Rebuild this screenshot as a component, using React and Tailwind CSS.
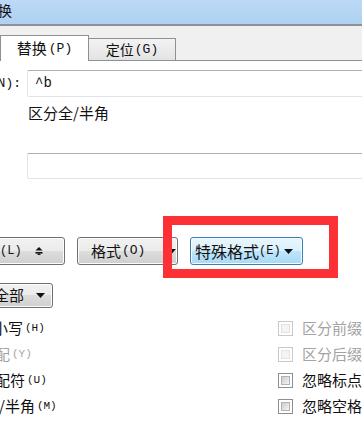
import React from 'react';
import clsx from 'clsx';

function Key({ children, className }) {
  return <span className={clsx("font-['Liberation_Mono',monospace]", className)}>{children}</span>;
}

function Arrow({ className }) {
  return (
    <svg width="9" height="5" viewBox="0 0 9 5" className={className}>
      <path d="M0 0h9L4.5 5z" fill="#111" />
    </svg>
  );
}

function WinButton({ blue, className, children }) {
  return (
    <div
      className={clsx(
        'flex h-[28px] shrink-0 items-center rounded-[3px] border',
        blue
          ? 'border-[#3c7fb1] bg-[linear-gradient(#eaf6fd_0%,#d9f0fc_50%,#bee6fd_50%,#a7d9f5_100%)] shadow-[inset_0_0_0_1px_#f4fbff]'
          : 'border-[#707070] bg-[linear-gradient(#f2f2f2_0%,#ebebeb_50%,#dddddd_50%,#cfcfcf_100%)] shadow-[inset_0_0_0_1px_#fcfcfc]',
        className
      )}
    >
      {children}
    </div>
  );
}

function CheckBox({ disabled }) {
  return (
    <div
      className={clsx(
        'flex h-[15px] w-[15px] shrink-0 items-center justify-center border bg-white',
        disabled ? 'border-[#c9c9c9]' : 'border-[#8e8f8f]'
      )}
    >
      <div
        className={clsx(
          'h-[9px] w-[9px] border',
          disabled
            ? 'border-[#e2e2e2] bg-[#f4f4f4]'
            : 'border-[#b0b4b9] bg-[linear-gradient(135deg,#c8ccd1,#f5f5f5)]'
        )}
      />
    </div>
  );
}

const rows = [
  { left: '大小写', leftKey: '(H)', shift: '-ml-[22px]', leftMuted: false, right: '区分前缀', rightMuted: true },
  { left: '通配', leftKey: '(Y)', shift: '-ml-[20px]', leftMuted: true, right: '区分后缀', rightMuted: true },
  { left: '通配符', leftKey: '(U)', shift: '-ml-[20px]', leftMuted: false, right: '忽略标点', rightMuted: false },
  { left: '区分全/半角', leftKey: '(M)', shift: '-ml-[46px]', leftMuted: false, right: '忽略空格', rightMuted: false },
];

export default function App() {
  return (
    <div className="relative h-[434px] w-[362px] overflow-hidden bg-white font-['Noto_Sans_CJK_SC','Liberation_Sans',sans-serif] text-[#111]">
      {/* title bar */}
      <div className="flex h-[26px] items-start border-b-2 border-[#8b9199] bg-[linear-gradient(#bcd9f6,#b0d1f2)] pt-[1px]">
        <span className="-ml-[2px] text-[14px] leading-[18px]">换</span>
      </div>

      {/* tabs */}
      <div className="flex h-[35px] items-end bg-[#f0f0f0]">
        <div className="flex h-[26px] w-[89px] shrink-0 items-center justify-center border-x border-t border-[#8c9198] bg-white text-[15px]">
          替换<Key className="ml-[2px] text-[13px]">(P)</Key>
        </div>
        <div className="flex h-[23px] w-[87px] shrink-0 items-center justify-center border-y border-r border-[#8c9198] bg-[linear-gradient(#f3f3f3,#e3e3e3)] text-[14px]">
          定位<Key className="ml-[1px] text-[13px]">(G)</Key>
        </div>
        <div className="h-full flex-1 border-b border-[#8c9198]" />
      </div>

      {/* find box */}
      <div className="mt-[9px] flex h-[27px] items-center">
        <div className="flex w-[27px] shrink-0 justify-end overflow-hidden whitespace-nowrap pr-[6px] text-[14px]">
          <Key className="text-[13px]">(N):</Key>
        </div>
        <div className="flex h-full min-w-[360px] items-center rounded-[2px] border border-[#dfe3ea] border-t-[#abadb3] pl-[7px]">
          <Key className="text-[14px]">^b</Key>
        </div>
      </div>

      <div className="mt-[6px] h-[20px] pl-[28px] text-[15px] leading-[20px]">区分全/半角</div>

      <div className="mt-[30px] flex h-[26px]">
        <div className="w-[27px] shrink-0" />
        <div className="h-full min-w-[360px] rounded-[2px] border border-[#dfe3ea] border-t-[#abadb3]" />
      </div>

      {/* buttons */}
      <div className="mt-[58px] flex h-[28px] items-center">
        <WinButton className="-ml-[46px] w-[111px] pl-[15px] text-[15px]">
          更少<Key className="text-[12px]">(L)</Key>
          <svg width="8" height="8" viewBox="0 0 8 8" className="ml-[13px]">
            <path d="M0.5 3.5L4 0l3.5 3.5z" fill="#111" />
            <rect x="0.5" y="5" width="7" height="1.6" fill="#111" />
            <path d="M2 8L4 6.2 6 8z" fill="#111" />
          </svg>
        </WinButton>
        <WinButton className="ml-[12px] w-[101px] pl-[13px] text-[15px]">
          格式<Key className="ml-[1px] text-[13px]">(O)</Key>
          <Arrow className="ml-[22px]" />
        </WinButton>
        <WinButton blue className="ml-[12px] w-[113px] pl-[4px] text-[16px]">
          特殊格式<Key className="text-[12px]">(E)</Key>
          <Arrow className="ml-[3px]" />
        </WinButton>
      </div>

      {/* search scope */}
      <div className="mt-[18px] flex h-[25px] items-center">
        <div className="-ml-[28px] flex h-full w-[81px] items-center rounded-[3px] border border-[#707070] bg-[linear-gradient(#f2f2f2_0%,#ebebeb_50%,#dddddd_50%,#cfcfcf_100%)] pl-[6px] text-[15px] shadow-[inset_0_0_0_1px_#fcfcfc]">
          搜全部
          <Arrow className="ml-[12px]" />
        </div>
      </div>

      {/* options */}
      <div className="mt-[7px] flex flex-col">
        {rows.map((r) => (
          <div key={r.right} className="flex h-[26px] items-center whitespace-nowrap">
            <div className={clsx('flex w-[278px] shrink-0 items-center text-[15px]', r.leftMuted && 'text-[#a3a3a3]')}>
              <span className={r.shift}>{r.left}</span>
              <Key className="ml-[2px] text-[11px]">{r.leftKey}</Key>
            </div>
            <CheckBox disabled={r.rightMuted} />
            <span className={clsx('ml-[9px] text-[15px]', r.rightMuted && 'text-[#a3a3a3]')}>{r.right}</span>
          </div>
        ))}
      </div>

      {/* annotation */}
      <div className="absolute left-[163px] top-[216px] h-[62px] w-[175px] border-[9px] border-[#fb3136]" />
    </div>
  );
}
